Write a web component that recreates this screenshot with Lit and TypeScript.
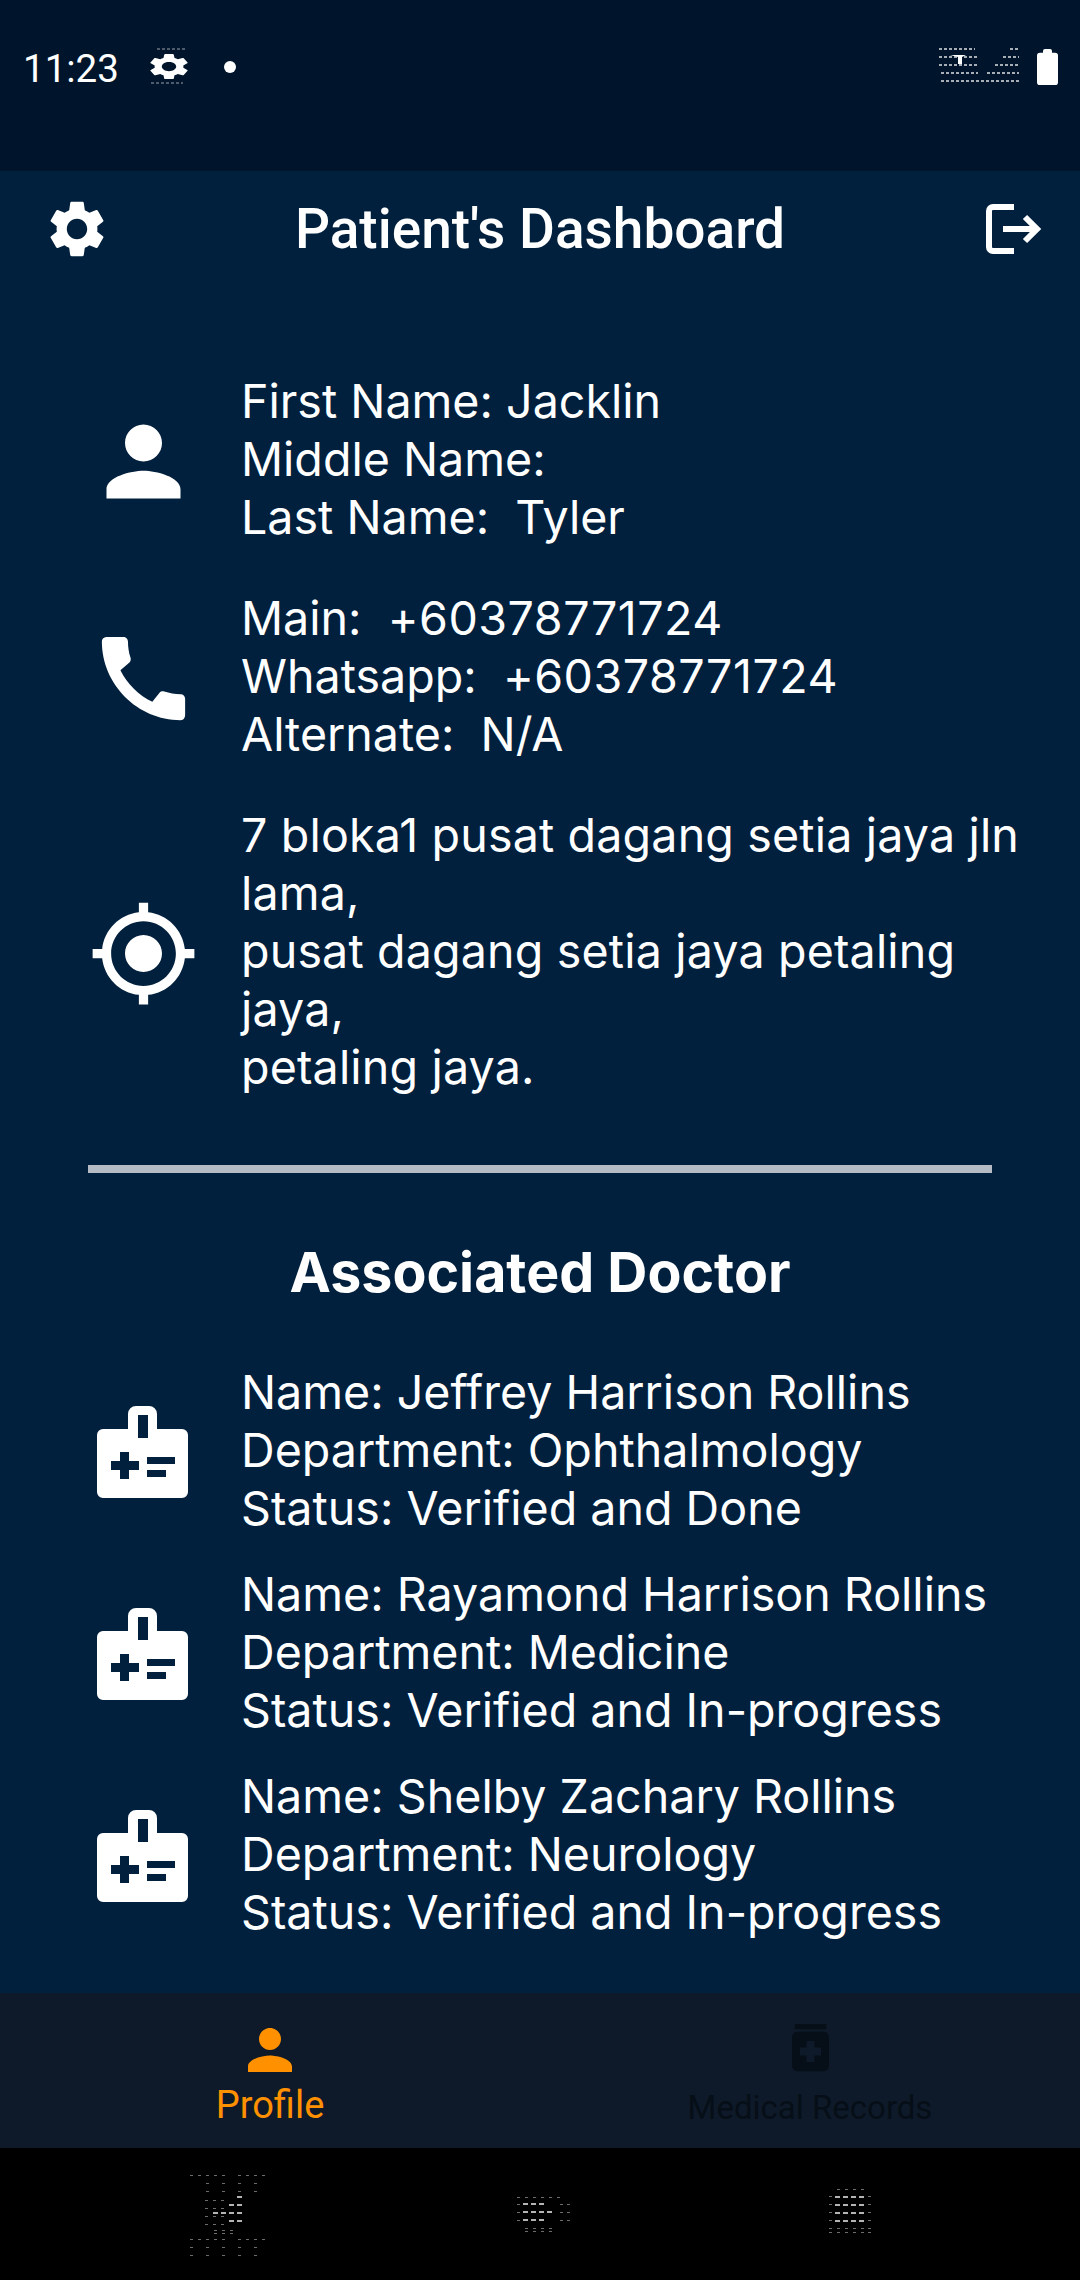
import { LitElement, html, css, svg } from 'lit';
import { customElement } from 'lit/decorators.js';

const PERSON = 'M12 12c2.21 0 4-1.79 4-4s-1.79-4-4-4-4 1.79-4 4 1.79 4 4 4zm0 2c-2.67 0-8 1.34-8 4v2h16v-2c0-2.66-5.33-4-8-4z';
const PHONE = 'M20.01 15.38c-1.23 0-2.42-.2-3.53-.56-.35-.12-.74-.03-1.01.24l-1.57 1.97c-2.83-1.35-5.48-3.9-6.89-6.83l1.95-1.66c.27-.28.35-.67.24-1.02-.37-1.11-.56-2.3-.56-3.53 0-.54-.45-.99-.99-.99H4.19C3.65 3 3 3.24 3 3.99 3 13.28 10.73 21 20.01 21c.71 0 .99-.63.99-1.18v-3.45c0-.54-.45-.99-.99-.99z';
const LOCATION = 'M12 8c-2.21 0-4 1.79-4 4s1.79 4 4 4 4-1.79 4-4-1.79-4-4-4zm8.94 3c-.46-4.17-3.77-7.48-7.94-7.94V1h-2v2.06C6.83 3.52 3.52 6.83 3.06 11H1v2h2.06c.46 4.17 3.77 7.48 7.94 7.94V23h2v-2.06c4.17-.46 7.48-3.77 7.94-7.94H23v-2h-2.06zM12 19c-3.87 0-7-3.13-7-7s3.13-7 7-7 7 3.13 7 7-3.13 7-7 7z';
const GEAR = 'M19.14 12.94c.04-.3.06-.61.06-.94 0-.32-.02-.64-.07-.94l2.03-1.58c.18-.14.23-.41.12-.61l-1.92-3.32c-.12-.22-.37-.29-.59-.22l-2.39.96c-.5-.38-1.03-.7-1.62-.94l-.36-2.54c-.04-.24-.24-.41-.48-.41h-3.84c-.24 0-.43.17-.47.41l-.36 2.54c-.59.24-1.13.57-1.62.94l-2.39-.96c-.22-.08-.47 0-.59.22L2.74 8.87c-.12.21-.08.47.12.61l2.03 1.58c-.05.3-.09.63-.09.94s.02.64.07.94l-2.03 1.58c-.18.14-.23.41-.12.61l1.92 3.32c.12.22.37.29.59.22l2.39-.96c.5.38 1.03.7 1.62.94l.36 2.54c.05.24.24.41.48.41h3.84c.24 0 .44-.17.47-.41l.36-2.54c.59-.24 1.13-.56 1.62-.94l2.39.96c.22.08.47 0 .59-.22l1.92-3.32c.12-.22.07-.47-.12-.61l-2.01-1.58zM12 15.6c-1.98 0-3.6-1.62-3.6-3.6s1.62-3.6 3.6-3.6 3.6 1.62 3.6 3.6-1.62 3.6-3.6 3.6z';
const BOTTLE = 'M6 3h12v2H6zm11 3H7c-1.1 0-2 .9-2 2v11c0 1.1.9 2 2 2h10c1.1 0 2-.9 2-2V8c0-1.1-.9-2-2-2zm-1 9h-2.5v2.5h-3V15H8v-3h2.5V9.5h3V12H16v3z';

// the reference's nav bar icons are broken up into dashes: [x, y] in page x, bar-relative y
const grid = (xs: number[], ys: number[]) => ys.flatMap((y) => xs.map((x) => [x, y]));

const NAV_BRIGHT = [
  [237, 48], [229, 56], [237, 56], [213, 64], [221, 64], [229, 64], [237, 64], [229, 72], [237, 72],
  [523, 55], [531, 55], [539, 55], [523, 63], [531, 63], [539, 63], [547, 63], [523, 71], [531, 71], [539, 71],
  ...grid([835, 843, 851, 859], [48, 56, 64, 72]),
];

const NAV_DIM = [
  ...grid([190, 198, 206, 214, 222, 238, 246, 254, 262], [27, 91]),
  ...grid([190, 206, 222, 238, 254], [99, 107]),
  ...grid([206, 222, 238, 254], [35, 43]),
  ...grid([214, 222, 230], [82, 85]),
  ...grid([205, 213, 221], [52, 60, 68, 76]),
  ...grid([517, 525, 533, 541, 549, 557], [49]),
  ...grid([517, 560, 567], [56, 64, 72]),
  ...grid([525, 533, 541, 549], [80, 83]),
  ...grid([829, 868], [48, 56, 64, 72]),
  ...grid([829, 837, 845, 853, 861, 868], [80, 84]),
  ...grid([837, 845, 853, 861], [41]),
];

const SIGNAL_ROWS = [
  [[939, 975], [1010, 1019]],
  [[939, 978], [1003, 1019]],
  [[939, 978], [995, 1019]],
  [[941, 978], [987, 1019]],
  [[941, 1019]],
];

interface Info {
  lines: string[];
}

const DOCTORS: Info[] = [
  { lines: ['Name: Jeffrey Harrison Rollins', 'Department: Ophthalmology', 'Status: Verified and Done'] },
  { lines: ['Name: Rayamond Harrison Rollins', 'Department: Medicine', 'Status: Verified and In-progress'] },
  { lines: ['Name: Shelby Zachary Rollins', 'Department: Neurology', 'Status: Verified and In-progress'] },
];

@customElement('app-root')
export class AppRoot extends LitElement {
  static styles = css`
    :host {
      display: block;
      width: 1080px;
      height: 2280px;
      background: #01203d;
      color: #fff;
      font-family: 'Inter', sans-serif;
    }

    svg {
      display: block;
      flex: none;
    }

    .status {
      height: 171px;
      box-sizing: border-box;
      padding: 46px 22px 0 23px;
      background: #00152c;
      display: flex;
      align-items: flex-start;
    }

    .time {
      font: 400 38.5px/45px 'Roboto', sans-serif;
      width: 122px;
    }

    .status-dot {
      width: 12px;
      height: 12px;
      border-radius: 50%;
      background: #fff;
      margin: 15px 0 0 31px;
    }

    .status-right {
      margin-left: auto;
      display: flex;
      gap: 18px;
    }

    .battery {
      margin-top: 3px;
    }

    .header {
      height: 116px;
      display: grid;
      grid-template-columns: 154px 1fr 154px;
      align-items: center;
    }

    .header-left {
      padding-left: 43px;
    }

    .header-right {
      display: flex;
      justify-content: flex-end;
      padding-right: 38px;
    }

    .title {
      font: 500 55px/60px 'Roboto', sans-serif;
      text-align: center;
    }

    .content {
      padding-top: 85px;
      height: 1706px;
      box-sizing: border-box;
    }

    .rows {
      display: flex;
      flex-direction: column;
      gap: 43px;
    }

    .rows.doctors {
      gap: 28px;
    }

    .row {
      display: flex;
      align-items: center;
    }

    .icon {
      width: 111px;
      margin: 4px 42px 0 88px;
      flex: none;
      display: flex;
      justify-content: center;
    }

    .badge {
      padding-right: 2px;
      box-sizing: border-box;
    }

    .text {
      font-size: 46.6px;
      line-height: 58px;
      width: 800px;
    }

    .text.address {
      letter-spacing: 0.15px;
    }

    .num {
      letter-spacing: 0.5px;
    }

    .divider {
      height: 8px;
      margin: 69px 88px 0;
      background: #b5bbc5;
    }

    .heading {
      font-size: 55.5px;
      line-height: 60px;
      font-weight: 700;
      text-align: center;
      margin: 69px 0 61px;
    }

    .tabs {
      height: 155px;
      background: #0e1a29;
      display: flex;
    }

    .tab {
      width: 50%;
      display: flex;
      flex-direction: column;
      align-items: center;
      font: 400 38px/44px 'Roboto', sans-serif;
      padding-top: 24px;
      box-sizing: border-box;
    }

    .tab.active {
      color: #ff9100;
      fill: #ff9100;
    }

    .tab.idle {
      color: #060e17;
      fill: #060e17;
      font-size: 33px;
      padding-top: 23px;
    }

    .tab.idle span {
      margin-top: 7px;
    }

    .nav {
      height: 132px;
      background: #000;
    }
  `;

  private icon(d: string) {
    return html`<div class="icon">
      <svg width="111" height="111" viewBox="0 0 24 24" fill="#fff"><path d=${d}></path></svg>
    </div>`;
  }

  private badge() {
    return html`<div class="icon badge">
      <svg width="91" height="92" viewBox="0 0 91 92">
        <path fill="#fff" fill-rule="evenodd" d="M41 9h10v23H41zM39 0h13a8 8 0 0 1 8 8v15h25a6 6 0 0 1 6 6v57a6 6 0 0 1-6 6H6a6 6 0 0 1-6-6V29a6 6 0 0 1 6-6h25V8a8 8 0 0 1 8-8zM23 46v9h-9v9h9v9h9v-9h10v-9H32v-9zM50 51v7h28v-7zM50 64v7h19v-7z"></path>
      </svg>
    </div>`;
  }

  private block(lines: string[]) {
    return html`<div class="text">${lines.map((l) => html`<div>${l}</div>`)}</div>`;
  }

  render() {
    return html`
      <div class="status">
        <div class="time">11:23</div>
        <svg width="48" height="40" viewBox="0 0 48 40">
          <path fill="#fff" transform="translate(0 5) scale(2 1.3)" d=${GEAR}></path>
          <path stroke="#fff" stroke-width="1" stroke-dasharray="3 2" opacity="0.6" d="M12 3H40M6 37H38"></path>
        </svg>
        <div class="status-dot"></div>
        <div class="status-right">
          <svg width="80" height="40" viewBox="939 46 80 40">
            ${SIGNAL_ROWS.map((spans, i) =>
              spans.map(
                ([a, b]) => svg`<line x1=${a} x2=${b} y1=${49 + i * 8} y2=${49 + i * 8} stroke="#fff" stroke-width="2" stroke-dasharray="3 2" opacity="0.65"></line>`,
              ),
            )}
            <path fill="#fff" d="M950 55h16l-4 2v7h-4v-7z"></path>
          </svg>
          <svg class="battery" width="21" height="36" viewBox="0 0 21 38" preserveAspectRatio="none">
            <path fill="#fff" d="M6 2a2 2 0 0 1 2-2h5a2 2 0 0 1 2 2v2h3a3 3 0 0 1 3 3v28a3 3 0 0 1-3 3H3a3 3 0 0 1-3-3V7a3 3 0 0 1 3-3h3z"></path>
          </svg>
        </div>
      </div>

      <div class="header">
        <div class="header-left">
          <svg width="68" height="68" viewBox="0 0 24 24" fill="#fff"><path d=${GEAR}></path></svg>
        </div>
        <div class="title">Patient's Dashboard</div>
        <div class="header-right">
          <svg width="56" height="50" viewBox="0 0 56 50" fill="none" stroke="#fff" stroke-width="6">
            <path d="M28 3H7a4 4 0 0 0-4 4v36a4 4 0 0 0 4 4h21"></path>
            <path d="M17 25H52"></path>
            <path d="M39 13L51 25L39 37"></path>
          </svg>
        </div>
      </div>

      <div class="content">
        <div class="rows">
          <div class="row">
            ${this.icon(PERSON)}
            ${this.block(['First Name: Jacklin', 'Middle Name:', 'Last Name:\u00a0 Tyler'])}
          </div>
          <div class="row">
            ${this.icon(PHONE)}
            <div class="text">
              <div>Main:\u00a0 <span class="num">+60378771724</span></div>
              <div>Whatsapp:\u00a0 <span class="num">+60378771724</span></div>
              <div>Alternate:\u00a0 N/A</div>
            </div>
          </div>
          <div class="row">
            ${this.icon(LOCATION)}
            <div class="text address">
              <div>7 bloka1 pusat dagang setia jaya jln lama,</div>
              <div>pusat dagang setia jaya petaling jaya,</div>
              <div>petaling jaya.</div>
            </div>
          </div>
        </div>

        <div class="divider"></div>
        <div class="heading">Associated Doctor</div>

        <div class="rows doctors">
          ${DOCTORS.map((d) => html`<div class="row">${this.badge()}${this.block(d.lines)}</div>`)}
        </div>
      </div>

      <div class="tabs">
        <div class="tab active">
          <svg width="66" height="66" viewBox="0 0 24 24"><path d=${PERSON}></path></svg>
          <span>Profile</span>
        </div>
        <div class="tab idle">
          <svg width="63" height="63" viewBox="0 0 24 24"><path d=${BOTTLE}></path></svg>
          <span>Medical Records</span>
        </div>
      </div>

      <div class="nav">
        <svg width="1080" height="132" viewBox="0 0 1080 132">
          ${NAV_DIM.map(([x, y]) => svg`<rect x=${x} y=${y} width="3" height="1" fill="#6d6d6d"></rect>`)}
          ${NAV_BRIGHT.map(([x, y]) => svg`<rect x=${x} y=${y} width="5" height="2" fill="#b4b4b4"></rect>`)}
        </svg>
      </div>
    `;
  }
}
